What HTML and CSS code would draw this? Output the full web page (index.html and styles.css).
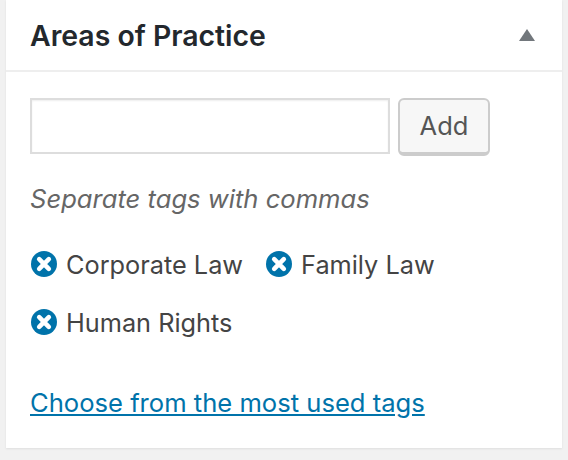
FILE: index.html
```html
<!DOCTYPE html>
<html>

<head>
    <meta charset="utf-8">
    <title>Areas of Practice</title>
    <link rel="stylesheet" href="styles.css">
</head>

<body>
    <div class="postbox">
        <div class="postbox-head">
            <h2>Areas of Practice</h2>
            <span class="toggle-arrow"></span>
        </div>
        <div class="postbox-body">
            <div class="tag-form">
                <input class="tag-input" type="text">
                <button class="tag-add">Add</button>
            </div>
            <p class="howto">Separate tags with commas</p>
            <ul class="tag-list">
                <li class="tag">
                    <svg class="tag-remove" viewBox="0 0 26 26"><circle cx="13" cy="13" r="13" fill="#0073aa"/><path d="M8.2 8.2l9.6 9.6M17.8 8.2l-9.6 9.6" stroke="#fff" stroke-width="4.6" stroke-linecap="round"/></svg>
                    Corporate Law
                </li>
                <li class="tag">
                    <svg class="tag-remove" viewBox="0 0 26 26"><circle cx="13" cy="13" r="13" fill="#0073aa"/><path d="M8.2 8.2l9.6 9.6M17.8 8.2l-9.6 9.6" stroke="#fff" stroke-width="4.6" stroke-linecap="round"/></svg>
                    Family Law
                </li>
                <li class="tag">
                    <svg class="tag-remove" viewBox="0 0 26 26"><circle cx="13" cy="13" r="13" fill="#0073aa"/><path d="M8.2 8.2l9.6 9.6M17.8 8.2l-9.6 9.6" stroke="#fff" stroke-width="4.6" stroke-linecap="round"/></svg>
                    Human Rights
                </li>
            </ul>
            <a class="most-used" href="#">Choose from the most used tags</a>
        </div>
    </div>
</body>

</html>
```

FILE: styles.css
```css
* {
    padding: 0;
    margin: 0;
    box-sizing: border-box;
}

body {
    background: #f1f1f1;
    font-family: "Inter", "Liberation Sans", sans-serif;
    color: #444;
    height: 460px;
    padding: 0 6px;
    overflow: hidden;
}

.postbox {
    background: #fff;
    height: 448px;
    box-shadow: 0 1px 2px rgba(0, 0, 0, 0.08);
}

.postbox-head {
    display: flex;
    justify-content: space-between;
    align-items: center;
    height: 72px;
    padding: 0 27px 0 24px;
    border-bottom: 2px solid #eee;
}

.postbox-head h2 {
    font-size: 28.4px;
    font-weight: 600;
    color: #23282d;
}

.toggle-arrow {
    width: 0;
    height: 0;
    border-left: 8px solid transparent;
    border-right: 8px solid transparent;
    border-bottom: 12px solid #72777c;
}

.postbox-body {
    padding: 26px 24px 0 24px;
}

.tag-form {
    display: flex;
    gap: 8px;
    align-items: flex-start;
}

.tag-input {
    width: 360px;
    height: 56px;
    border: 2px solid #ddd;
    background: #fff;
    box-shadow: inset 0 1px 2px rgba(0, 0, 0, 0.07);
}

.tag-add {
    width: 92px;
    height: 58px;
    padding-bottom: 2px;
    border: 2px solid #ccc;
    border-bottom-width: 4px;
    border-radius: 6px;
    background: #f7f7f7;
    color: #555;
    font-family: inherit;
    font-size: 25.5px;
}

.howto {
    margin-top: 27px;
    font-size: 25.6px;
    font-style: italic;
    color: #666;
}

.tag-list {
    list-style: none;
    display: flex;
    flex-wrap: wrap;
    column-gap: 22px;
    row-gap: 28px;
    margin-top: 35px;
    width: 440px;
}

.tag {
    display: flex;
    align-items: center;
    gap: 9px;
    height: 30px;
    font-size: 25.3px;
}

.tag-remove {
    width: 26px;
    height: 26px;
    margin-left: 1px;
}

.most-used {
    display: inline-block;
    margin-top: 50px;
    font-size: 25.6px;
    color: #0073aa;
}
```
